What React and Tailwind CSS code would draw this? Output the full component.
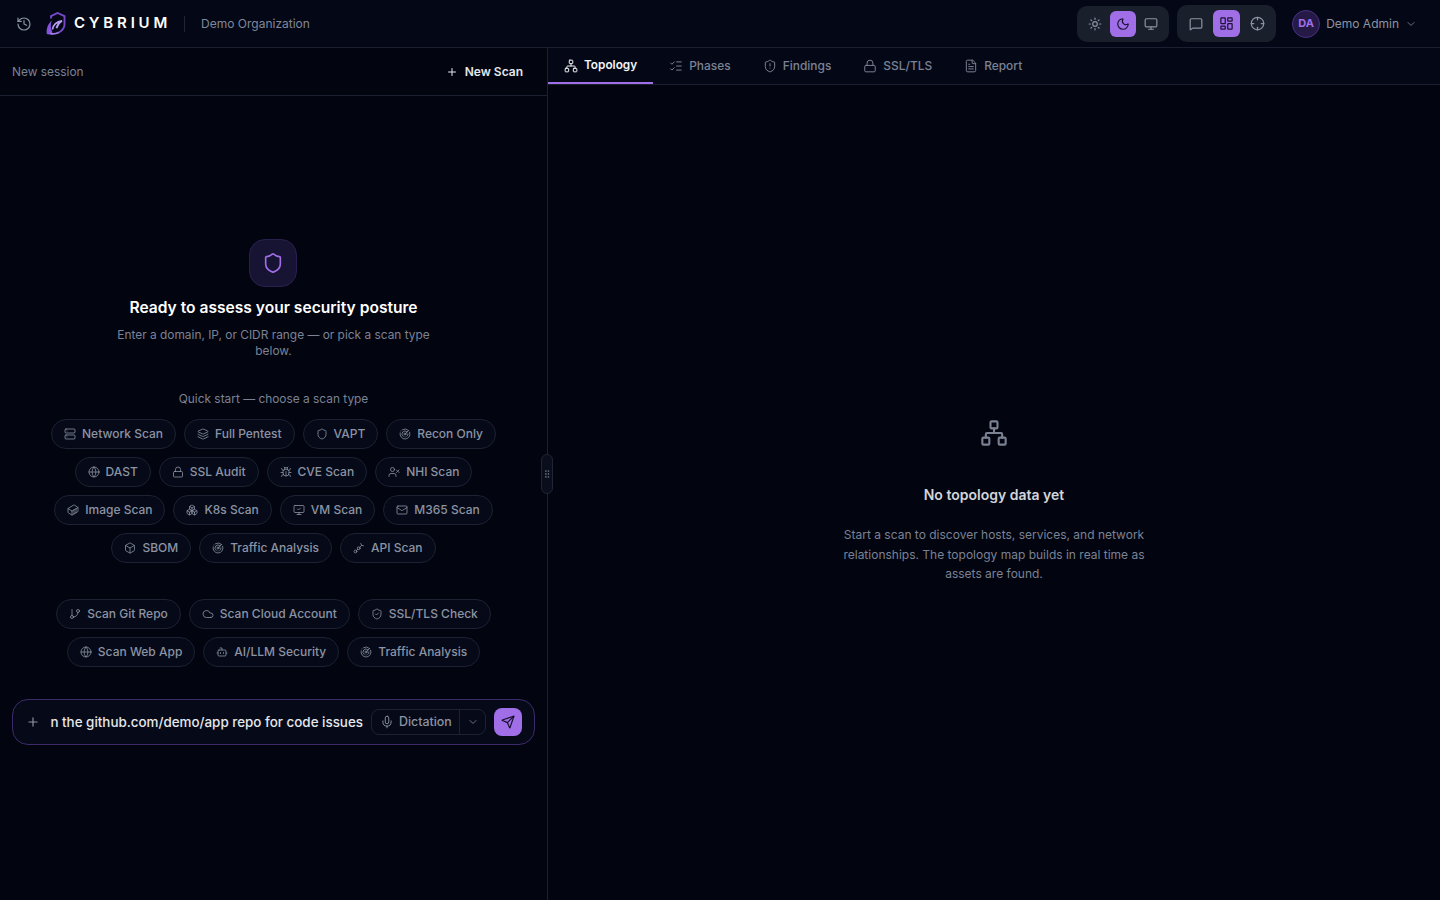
import {
  History, Sun, Moon, Monitor, MessageSquare, LayoutDashboard, Crosshair, ChevronDown, Plus,
  Network, ListChecks, ShieldAlert, Lock, FileText, Server, Layers, Shield, Radar, Globe, Bug,
  UserX, Container, Boxes, MonitorCheck, Mail, Box, GitBranch, Cloud, ShieldCheck, Bot,
  Mic, Send, GripVertical,
} from "lucide-react";

const ApiIcon = ({ className, strokeWidth }) => (
  <svg viewBox="0 0 24 24" fill="none" stroke="currentColor" strokeWidth={strokeWidth} strokeLinecap="round" className={className}>
    <circle cx="5" cy="19" r="2.8" />
    <circle cx="11.5" cy="12.5" r="2.8" />
    <path d="M7 17l2.5-2.5M13.5 10.5L17 7M15.5 3l1.5 3M21 7.5l-3-.5" />
  </svg>
);

const scanRows = [
  [
    { icon: Server, label: "Network Scan" },
    { icon: Layers, label: "Full Pentest" },
    { icon: Shield, label: "VAPT" },
    { icon: Radar, label: "Recon Only" },
  ],
  [
    { icon: Globe, label: "DAST" },
    { icon: Lock, label: "SSL Audit" },
    { icon: Bug, label: "CVE Scan" },
    { icon: UserX, label: "NHI Scan" },
  ],
  [
    { icon: Container, label: "Image Scan" },
    { icon: Boxes, label: "K8s Scan" },
    { icon: MonitorCheck, label: "VM Scan" },
    { icon: Mail, label: "M365 Scan" },
  ],
  [
    { icon: Box, label: "SBOM" },
    { icon: Radar, label: "Traffic Analysis" },
    { icon: ApiIcon, label: "API Scan" },
  ],
];

const suggestionRows = [
  [
    { icon: GitBranch, label: "Scan Git Repo" },
    { icon: Cloud, label: "Scan Cloud Account" },
    { icon: ShieldCheck, label: "SSL/TLS Check" },
  ],
  [
    { icon: Globe, label: "Scan Web App" },
    { icon: Bot, label: "AI/LLM Security" },
    { icon: Radar, label: "Traffic Analysis" },
  ],
];

const tabs = [
  { icon: Network, label: "Topology", active: true },
  { icon: ListChecks, label: "Phases" },
  { icon: ShieldAlert, label: "Findings" },
  { icon: Lock, label: "SSL/TLS" },
  { icon: FileText, label: "Report" },
];

const Logo = () => (
  <svg width="21" height="24" viewBox="0 0 21 24" fill="none" className="shrink-0">
    <path d="M5 6.5V4.2L11.5 1l7 3.2v8.3c0 3.8-3 6.6-6.5 8.5" stroke="#7748c9" strokeWidth="1.9" />
    <path d="M0.8 22c-.6-5 .8-10 5-13.5-1.4 3.6-1.4 8 .6 11.6C5 22.4 2.8 23 .8 22z" fill="#8452dc" />
    <path d="M6.5 17.5c.6-4.4 4.2-8 9.5-8.7-2.6 1.6-4.6 4-5.6 7.4" stroke="#b99cf2" strokeWidth="1.8" />
    <path d="M4 21.5c3 .7 6 .4 8.5-1" stroke="#a27bea" strokeWidth="1.8" />
  </svg>
);

const Chip = ({ icon: Icon, label }) => (
  <button className="flex h-[30px] items-center gap-[6px] rounded-full border border-[#1c2233] bg-[#060a18] px-[12px] text-xs font-medium whitespace-nowrap text-[#8c93a3]">
    <Icon className="h-3 w-3" strokeWidth={1.6} />
    {label}
  </button>
);

const ChipRows = ({ rows }) => (
  <div className="flex flex-col gap-2">
    {rows.map((row, i) => (
      <div key={i} className="flex justify-center gap-2">
        {row.map((chip) => (
          <Chip key={chip.label} icon={chip.icon} label={chip.label} />
        ))}
      </div>
    ))}
  </div>
);

const Header = () => (
  <header className="flex h-[48px] items-center justify-between border-b border-[#1b2030] bg-[#040816] pl-4 pr-[23px]">
    <div className="flex items-center">
      <History className="h-4 w-4 text-[#8c93a3]" strokeWidth={1.8} />
      <div className="ml-[6px] flex items-center gap-[7px] pl-[8px]">
        <Logo />
        <span className="text-[15px] font-semibold tracking-[3.8px] text-white">CYBRIUM</span>
      </div>
      <div className="ml-[13px] h-[16px] w-px bg-[#1f2535]" />
      <span className="ml-4 text-xs text-[#80879a]">Demo Organization</span>
    </div>

    <div className="flex items-center">
      <div className="flex h-[36px] items-center gap-[2px] rounded-[10px] bg-[#1a202b] px-[5px]">
        <button className="flex h-[26px] w-[26px] items-center justify-center text-[#8c93a3]">
          <Sun className="h-[14px] w-[14px]" />
        </button>
        <button className="flex h-[26px] w-[26px] items-center justify-center rounded-md bg-[#a06ee6] text-[#1a1333]">
          <Moon className="h-[14px] w-[14px]" />
        </button>
        <button className="flex h-[26px] w-[26px] items-center justify-center text-[#8c93a3]">
          <Monitor className="h-[14px] w-[14px]" />
        </button>
      </div>
      <div className="ml-2 flex h-[37px] items-center gap-[4px] rounded-[10px] bg-[#1a202b] px-[5px]">
        <button className="flex h-[27px] w-[27px] items-center justify-center text-[#8c93a3]">
          <MessageSquare className="h-[14px] w-[14px]" />
        </button>
        <button className="flex h-[27px] w-[27px] items-center justify-center rounded-md bg-[#a06ee6] text-[#1a1333]">
          <LayoutDashboard className="h-[15px] w-[15px]" />
        </button>
        <button className="flex h-[27px] w-[27px] items-center justify-center text-[#8c93a3]">
          <Crosshair className="h-[15px] w-[15px]" />
        </button>
      </div>
      <div className="ml-4 flex items-center">
        <div className="flex h-[28px] w-[28px] items-center justify-center rounded-full border border-[#4b2f86] bg-[#241a45] text-[11px] font-bold text-[#a06ee6]">
          DA
        </div>
        <span className="ml-[6px] text-xs text-[#8c93a3]">Demo Admin</span>
        <ChevronDown className="ml-[6px] h-3 w-3 text-[#6b7280]" />
      </div>
    </div>
  </header>
);

const Composer = () => (
  <div className="mx-3 mt-[32px] flex h-[46px] items-center rounded-2xl border border-[#3d2a6b] bg-[#060a18] pl-[13px] pr-[12px]">
    <Plus className="h-[14px] w-[14px] shrink-0 text-[#8c93a3]" />
    <div className="ml-[10px] min-w-0 flex-1 overflow-hidden">
      <div className="flex justify-end text-[13.4px] font-medium whitespace-nowrap text-[#e5e7eb]">
        Scan the github.com/demo/app repo for code issues
      </div>
    </div>
    <div className="ml-2 flex h-[26px] w-[115px] shrink-0 items-center rounded-lg border border-[#1c2233] text-[12.4px] font-medium text-[#8c93a3]">
      <div className="flex flex-1 items-center gap-[5px] border-r border-[#1c2233] pl-[8px] leading-[24px]">
        <Mic className="h-[14px] w-[14px]" strokeWidth={1.6} />
        Dictation
      </div>
      <div className="flex w-[25px] justify-center">
        <ChevronDown className="h-3 w-3 text-[#6b7280]" />
      </div>
    </div>
    <button className="ml-2 flex h-[28px] w-[28px] shrink-0 items-center justify-center rounded-lg bg-[#a06ee6] text-[#14102a]">
      <Send className="h-[14px] w-[14px]" />
    </button>
  </div>
);

const ChatPane = () => (
  <section className="relative w-[548px] shrink-0 border-r border-[#1b2030]">
    <div className="flex h-[48px] items-center justify-between border-b border-[#1b2030] pl-3 pr-6">
      <span className="text-[11.9px] text-[#7b8294]">New session</span>
      <button className="flex items-center gap-[7px] text-xs font-semibold text-[#e5e7eb]">
        <Plus className="h-3 w-3" />
        New Scan
      </button>
    </div>

    <div className="flex flex-col pt-[143px]">
      <div className="flex flex-col items-center">
        <div className="-ml-[1px] flex h-[48px] w-[48px] items-center justify-center rounded-2xl border border-[#2a2050] bg-[#171333]">
          <Shield className="h-[22px] w-[22px] text-[#a06ee6]" strokeWidth={1.8} />
        </div>
        <h2 className="mt-[9px] text-[15.6px] leading-[24px] font-semibold text-white">Ready to assess your security posture</h2>
        <p className="mt-[7px] w-[330px] text-center text-[11.9px] leading-[16px] text-[#7b8294]">
          Enter a domain, IP, or CIDR range — or pick a scan type below.
        </p>
        <p className="mt-[32px] text-[11.9px] leading-[16px] text-[#7b8294]">Quick start — choose a scan type</p>
      </div>

      <div className="mt-[12px]">
        <ChipRows rows={scanRows} />
      </div>
      <div className="mt-[36px]">
        <ChipRows rows={suggestionRows} />
      </div>
      <Composer />
    </div>

    <div className="absolute top-[406px] -right-[6px] flex h-[40px] w-[12px] items-center justify-center rounded-md border border-[#1f2535] bg-[#0a0e1c]">
      <GripVertical className="h-3 w-3 text-[#6b7280]" />
    </div>
  </section>
);

const TopologyPane = () => (
  <section className="min-w-0 flex-1">
    <nav className="flex h-[37px] border-b border-[#1b2030] bg-[#040816]">
      {tabs.map(({ icon: Icon, label, active }) => (
        <button
          key={label}
          className={
            active
              ? "flex h-[36px] items-center gap-[6px] border-b-2 border-[#a06ee6] px-4 pt-px text-[11.8px] font-semibold text-[#f3f4f6]"
              : "flex h-[36px] items-center gap-[6px] border-b-2 border-transparent px-4 pt-px text-[11.95px] font-medium text-[#7b8294]"
          }
        >
          <Icon className="h-[14px] w-[14px]" strokeWidth={1.7} />
          {label}
        </button>
      ))}
    </nav>
    <div className="flex flex-col items-center pt-[334px]">
      <Network className="h-7 w-7 text-[#7b8294]" strokeWidth={1.8} />
      <h3 className="mt-[38px] text-sm leading-[20px] font-semibold text-[#d1d5db]">No topology data yet</h3>
      <p className="mt-[20px] w-[320px] text-center text-xs leading-[19.5px] text-[#7b8294]">
        Start a scan to discover hosts, services, and network relationships. The topology map builds in real time as assets are found.
      </p>
    </div>
  </section>
);

export default function App() {
  return (
    <div className="h-screen overflow-hidden bg-[#02040f] font-['Inter',sans-serif]">
      <Header />
      <main className="flex h-[852px]">
        <ChatPane />
        <TopologyPane />
      </main>
    </div>
  );
}
